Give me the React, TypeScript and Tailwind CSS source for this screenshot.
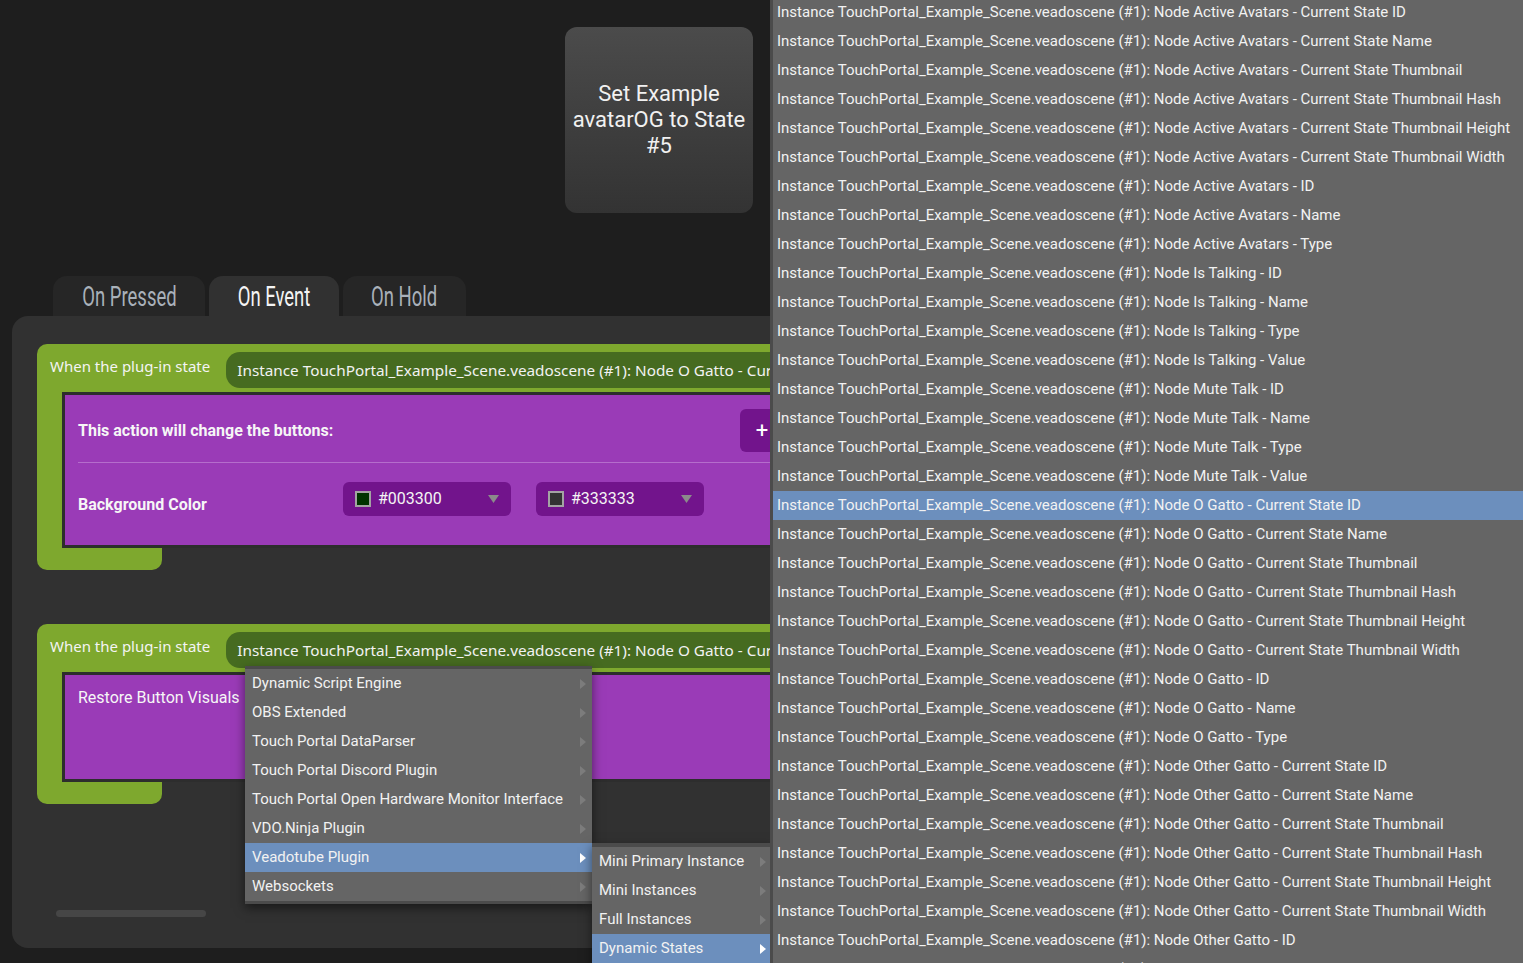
import React from 'react';

const roboto = { fontFamily: 'Roboto, "Noto Sans", sans-serif' };

const stateLabel = (node: string, field: string) =>
  `Instance TouchPortal_Example_Scene.veadoscene (#1): Node ${node} - ${field}`;

const currentFields = [
  "Current State ID",
  "Current State Name",
  "Current State Thumbnail",
  "Current State Thumbnail Hash",
  "Current State Thumbnail Height",
  "Current State Thumbnail Width",
];

const states: string[] = [
  ...[...currentFields, "ID", "Name", "Type"].map((f) => stateLabel("Active Avatars", f)),
  ...["ID", "Name", "Type", "Value"].map((f) => stateLabel("Is Talking", f)),
  ...["ID", "Name", "Type", "Value"].map((f) => stateLabel("Mute Talk", f)),
  ...[...currentFields, "ID", "Name", "Type"].map((f) => stateLabel("O Gatto", f)),
  ...[...currentFields, "ID", "Name", "Type"].map((f) => stateLabel("Other Gatto", f)),
];

const plugins = [
  "Dynamic Script Engine",
  "OBS Extended",
  "Touch Portal DataParser",
  "Touch Portal Discord Plugin",
  "Touch Portal Open Hardware Monitor Interface",
  "VDO.Ninja Plugin",
  "Veadotube Plugin",
  "Websockets",
];

const veadoGroups = ["Mini Primary Instance", "Mini Instances", "Full Instances", "Dynamic States"];

const Arrow = ({ active }: { active: boolean }) => (
  <svg width="6" height="10" viewBox="0 0 6 10" className="shrink-0">
    <polygon points="0,0 6,5 0,10" fill={active ? "#ffffff" : "#7c7c7c"} />
  </svg>
);

const MenuItem = ({ label, active, arrow = true }: { label: string; active?: boolean; arrow?: boolean }) => (
  <div
    className={`flex items-center justify-between h-[29px] pl-[7px] pr-[6px] text-[15px] whitespace-nowrap ${
      active ? "bg-[#6c8fbd]" : ""
    } text-[#f2f2f2]`}
  >
    <span>{label}</span>
    {arrow && <Arrow active={!!active} />}
  </div>
);

const ColorSelect = ({ color, value }: { color: string; value: string }) => (
  <div className="flex items-center w-[168px] h-[34px] rounded-[6px] bg-[#72148c] pl-[12px] pr-[12px]">
    <span className="w-[16px] h-[16px] border-2 border-[#a3a3a3]" style={{ background: color }} />
    <span className="ml-[7px] text-[16px] text-[#f4f4f4]" style={roboto}>{value}</span>
    <svg width="11" height="8" viewBox="0 0 11 8" className="ml-auto">
      <polygon points="0,0 11,0 5.5,8" fill="#8b8b8b" />
    </svg>
  </div>
);

const PlugHeader = () => (
  <div className="flex items-start h-[48px]">
    <span className="pl-[13px] pt-[11px] text-[15px] leading-[22px] text-[#f4f4f4] whitespace-nowrap" style={{ fontFamily: '"Noto Sans", sans-serif' }}>
      When the plug-in state
    </span>
    <div
      className="ml-[16px] mt-[8px] h-[36px] flex-1 rounded-[14px] bg-[#466b20] pl-[11px] flex items-center text-[15.3px] text-[#f2f2f2] whitespace-nowrap overflow-hidden"
      style={{ fontFamily: '"Noto Sans", sans-serif' }}
    >
      Instance TouchPortal_Example_Scene.veadoscene (#1): Node O Gatto - Current State ID
    </div>
  </div>
);

const StateBlock = ({ children }: { children: React.ReactNode }) => (
  <div className="flex flex-col">
    <div className="bg-[#7ea82e] rounded-tl-[10px] w-[900px]">
      <PlugHeader />
      <div className="pl-[25px]">
        <div className="border-[3px] border-[#2d2d2d] border-r-0 bg-[#9a3bb7]">{children}</div>
      </div>
    </div>
    <div className="w-[125px] h-[22px] bg-[#7ea82e] rounded-b-[10px]" />
  </div>
);

const Tab = ({ label, active, width }: { label: string; active?: boolean; width: string }) => (
  <div
    className={`${width} rounded-t-[14px] flex items-center justify-center ${
      active ? "bg-[#313131] text-[#f4f4f4]" : "bg-[#262626] text-[#a9b1ba]"
    }`}
  >
    <span className="inline-block text-[28px] leading-none scale-x-[0.66] whitespace-nowrap pt-[2px]">{label}</span>
  </div>
);

export default function App() {
  return (
    <div className="relative w-[1523px] h-[963px] overflow-hidden bg-[#1e1e1e]" style={roboto}>
      {/* button preview */}
      <div className="pt-[27px] pl-[565px]">
        <div className="w-[188px] h-[186px] rounded-[12px] bg-gradient-to-b from-[#4b4b4b] to-[#333333] flex items-center justify-center text-center text-[22px] leading-[26px] text-[#f1f1f1]">
          Set Example
          <br />
          avatarOG to State
          <br />
          #5
        </div>
      </div>

      {/* tabs */}
      <div className="flex gap-[4px] pl-[53px] mt-[63px] h-[40px]">
        <Tab label="On Pressed" width="w-[152px]" />
        <Tab label="On Event" width="w-[130px]" active />
        <Tab label="On Hold" width="w-[123px]" />
      </div>

      {/* panel */}
      <div className="ml-[12px] h-[632px] rounded-l-[16px] bg-[#313131] pt-[28px] pl-[25px]">
        <StateBlock>
          <div className="pl-[13px] pt-[14px] h-[150px]">
            <div className="flex items-center h-[43px]">
              <span className="w-[662px] text-[16px] font-bold text-[#f6f6f6]">This action will change the buttons:</span>
              <div className="w-[44px] h-[43px] rounded-[6px] bg-[#72148c] flex items-center justify-center text-[22px] text-white">
                +
              </div>
            </div>
            <div className="mt-[10px] h-px bg-[#b56dcc]" />
            <div className="flex items-center mt-[18px]">
              <span className="w-[265px] text-[16px] font-bold text-[#f6f6f6] pt-[12px]">Background Color</span>
              <ColorSelect color="#003300" value="#003300" />
              <div className="w-[25px]" />
              <ColorSelect color="#333333" value="#333333" />
            </div>
          </div>
        </StateBlock>

        <div className="mt-[54px]">
          <StateBlock>
            <div className="pl-[13px] pt-[11px] h-[104px] text-[16px] text-[#f6f6f6]">Restore Button Visuals</div>
          </StateBlock>
        </div>

        <div className="mt-[106px] ml-[19px] w-[150px] h-[7px] rounded-full bg-[#464646]" />
      </div>

      {/* plug-in menu */}
      <div className="absolute left-[245px] top-[666px] w-[347px] bg-[#4b4b4b] py-[3px] shadow-[0_4px_10px_rgba(0,0,0,0.5)]">
        <div className="bg-[#656565]">
          {plugins.map((p) => (
            <MenuItem key={p} label={p} active={p === "Veadotube Plugin"} />
          ))}
        </div>
      </div>

      {/* veadotube submenu */}
      <div className="absolute left-[592px] top-[843px] w-[180px] bg-[#4b4b4b] pt-[4px] shadow-[0_4px_10px_rgba(0,0,0,0.5)]">
        <div className="bg-[#656565]">
          {veadoGroups.map((g) => (
            <MenuItem key={g} label={g} active={g === "Dynamic States"} />
          ))}
        </div>
      </div>

      {/* state list */}
      <div className="absolute left-[770px] top-0 w-[753px] h-[963px] bg-[#656565] border-l-[3px] border-[#4b4b4b] overflow-hidden">
        <div className="-mt-[2px]">
          {states.map((s, i) => (
            <div
              key={i}
              className={`h-[29px] flex items-center pl-[4px] text-[15px] text-[#f2f2f2] whitespace-nowrap ${
                i === 17 ? "bg-[#6c8fbd]" : ""
              }`}
            >
              {s}
            </div>
          ))}
        </div>
      </div>
    </div>
  );
}
